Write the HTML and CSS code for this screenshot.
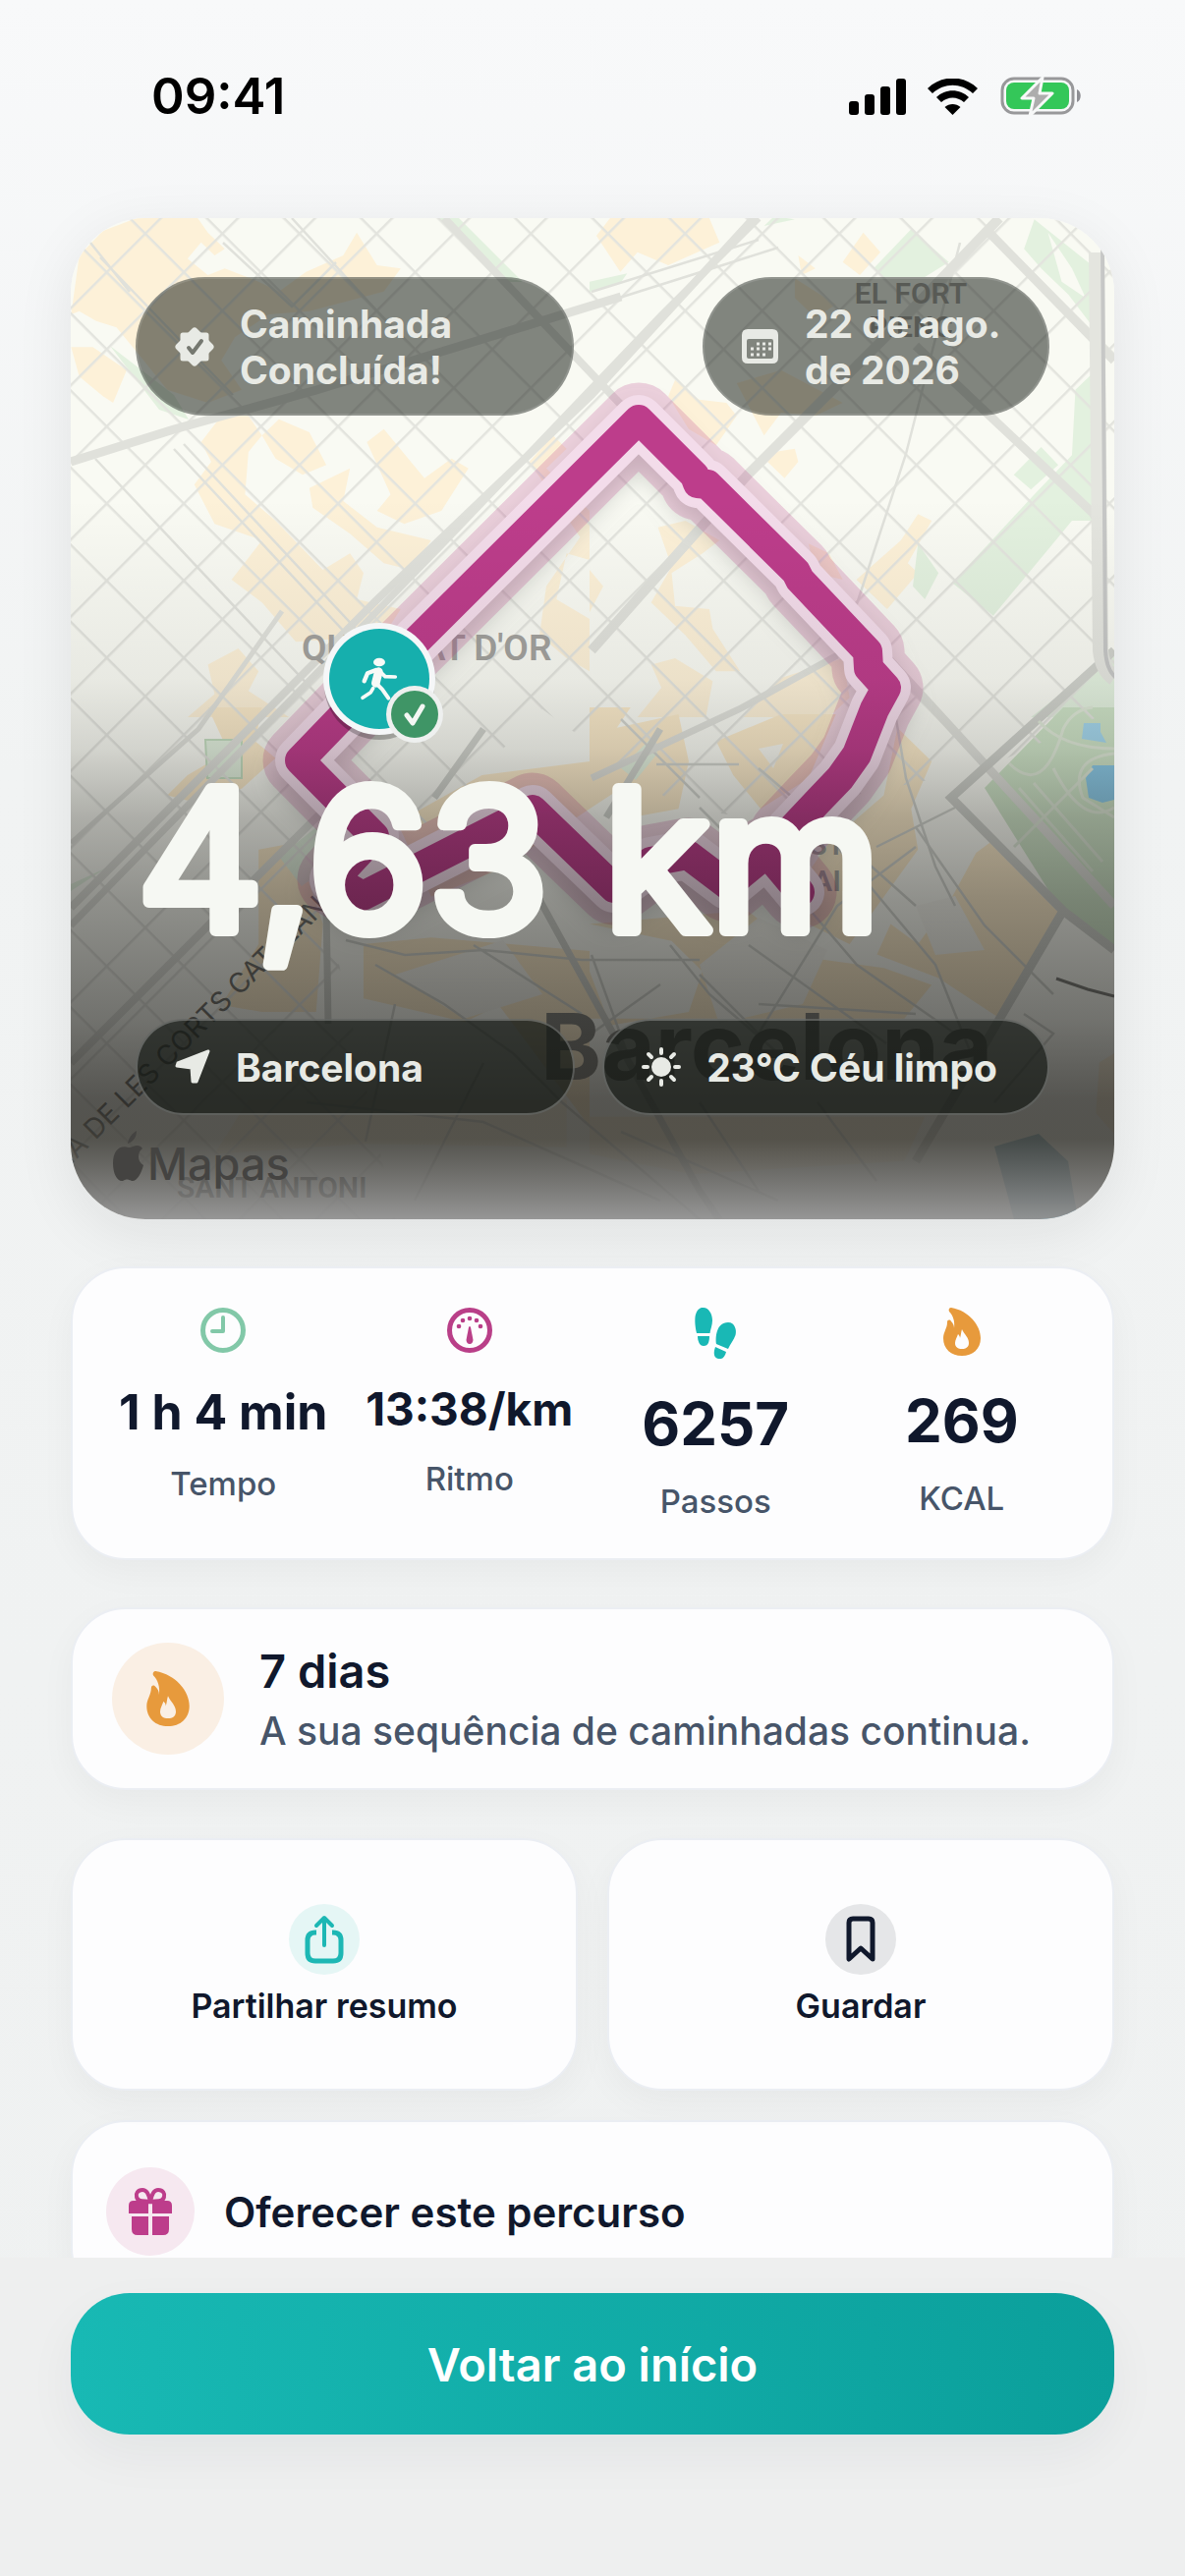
FILE: index.html
```html
<!DOCTYPE html>
<html lang="pt">
<head>
    <meta charset="UTF-8">
    <meta name="viewport" content="width=device-width, initial-scale=1">
    <title>Caminhada Concluída!</title>
    <link rel="stylesheet" href="styles.css">
</head>
<body>
<div class="app">
    <header class="statusBar">
        <time class="clock">09:41</time>
        <div class="statusIcons">
            <svg width="58" height="37" viewBox="0 0 58 37">
                <rect x="0" y="23" width="10" height="14" rx="3"/>
                <rect x="16" y="16" width="10" height="21" rx="3"/>
                <rect x="32" y="8" width="10" height="29" rx="3"/>
                <rect x="48" y="0" width="10" height="37" rx="3"/>
            </svg>
            <svg width="52" height="37" viewBox="0 0 52 37">
                <path d="M0 10C14-4 37-4 51 10L46 15C34 4 17 4 5 15Z"/>
                <path d="M9 19C18 10 33 10 42 19L37 24C30 18 21 18 14 24Z"/>
                <path d="M17.500 29C22 25 29 25 33.500 29L25.500 37Z"/>
            </svg>
            <svg width="84" height="40" viewBox="0 0 84 40">
                <rect x="2" y="2" width="72" height="35" rx="12" fill="none" stroke="#98989a" stroke-width="3"/>
                <rect x="6" y="6" width="64" height="27" rx="8" fill="#34c759"/>
                <path d="M78 13C83 15 83 24 78 26Z" fill="#8e8e93"/>
                <path d="M43 1L22 22H34L30 40L53 17H40Z" fill="#adadad" stroke="#f7f8f8" stroke-width="3" stroke-linejoin="round"/>
            </svg>
        </div>
    </header>

    <main class="content">
        <section class="hero">
            <svg class="map" viewBox="0 0 1062 1019" preserveAspectRatio="xMidYMid slice">
                <defs>
                    <pattern id="blocks" width="55.500" height="55.500" patternUnits="userSpaceOnUse" patternTransform="translate(743 251) rotate(45)">
                        <path d="M28 0V56M0 28H56" fill="none" stroke="#e3e4de" stroke-width="2.500"/>
                    </pattern>
                    <linearGradient id="shade" x1="0" y1="0" x2="0" y2="1">
                        <stop offset="0" stop-color="#000" stop-opacity="0"/>
                        <stop offset=".28" stop-color="#000" stop-opacity="0"/>
                        <stop offset=".46" stop-color="#0a0a08" stop-opacity=".07"/>
                        <stop offset=".53" stop-color="#0a0a08" stop-opacity=".16"/>
                        <stop offset=".6" stop-color="#0a0a08" stop-opacity=".32"/>
                        <stop offset=".68" stop-color="#0a0a08" stop-opacity=".44"/>
                        <stop offset=".8" stop-color="#10100e" stop-opacity=".58"/>
                        <stop offset=".88" stop-color="#1c1b18" stop-opacity=".74"/>
                        <stop offset=".92" stop-color="#35342f" stop-opacity=".84"/>
                        <stop offset="1" stop-color="#909090" stop-opacity=".94"/>
                    </linearGradient>
                    <filter id="soft" x="-10%" y="-10%" width="120%" height="120%">
                        <feGaussianBlur stdDeviation="12"/>
                    </filter>
                    <path id="route" d="M313 469L233 552L309 629L268 673L297 690L470 602L553 682L590 655L628 648L669 679L709 646L742 686L716 655L728 628L760 594L783 570L800 546L818 500L830 478L812 458L811 441L742 368L738 360L648 271L638 270L635 262L578 205Z"/>
                </defs>
                <rect width="1062" height="1019" fill="#f9faf3"/>

                <!-- built-up blocks -->
                <g transform="translate(-12 -12) scale(.3444 .3333)" fill="#fdf1d8">
                    <path d="M36 330L60 150L130 75L230 36H410L440 80L490 130L460 150L420 110L380 160L440 210L490 190L590 230L650 260L730 200L840 150L880 80L940 180L1010 190L960 260L850 290L740 320L620 330L520 400L480 470L540 560L440 600L320 560L250 470L170 370L110 350L60 320Z"/>
                    <path d="M36 430L100 430L200 500L160 600L130 580L60 520Z"/>
                    <path d="M480 640L560 640L600 700L650 650L740 690L790 790L720 820L640 770L600 700L560 750L550 880L640 960L780 1110L860 1060L900 1120L880 1200L1010 1230L960 1310L700 1330L600 1210L510 1140L600 1020L460 970L400 850L450 780L420 720Z"/>
                    <path d="M910 720L960 680L1080 830L1160 770L1210 800L1130 930L1020 970L940 930L980 880Z"/>
                    <path d="M740 860L860 800L840 900L940 980L1100 1020L1040 1110L960 1090L860 1000L750 920Z"/>
                    <path d="M1390 780L1460 700L1500 740L1440 800L1568 930V1080L1500 1060L1470 1200L1568 1260V1420L1500 1380L1420 1310L1440 1160L1540 1010Z"/>
                    <path d="M440 1400L530 1350L590 1420L560 1480L680 1560H380L460 1490Z"/>
                </g>
                <g transform="translate(528 -12) scale(.3482 .3333)" fill="#fdf1d8">
                    <path d="M60 36H350L380 110L230 180L140 140L90 200L20 90Z"/>
                    <path d="M610 150L660 190L620 210ZM740 170L800 80L850 140L790 210Z"/>
                    <path d="M600 220L720 300L660 340L600 280ZM430 540L560 500L740 600L660 640L560 630L510 700Z"/>
                    <path d="M250 530L320 590L400 600L430 640L370 730L290 680L230 580ZM540 750L600 740L610 780L570 830L520 780Z"/>
                    <path d="M200 980L280 960L380 1020L330 1060L240 1120L250 1220L350 1230L360 1290L440 1420L370 1420L280 1310L180 1210L240 1100Z"/>
                    <path d="M640 1030L700 1060L740 1140L660 1120ZM960 940L1000 960L930 1090L960 1120L870 1230L780 1140L910 1020Z"/>
                    <path d="M180 1400L250 1380L360 1450L340 1560H140L210 1470ZM560 1440L740 1380L760 1500L700 1560H450ZM0 1110L40 1160L0 1240Z"/>
                </g>
                <g transform="translate(-12 498) scale(.3444 .3444)" fill="#fbebcb">
                    <path d="M440 0H600L580 100L640 150L540 240L400 280L320 260L380 200L500 130ZM590 420L700 400L780 640L760 900L600 900L480 880L590 700Z"/>
                    <path d="M1000 340L1250 200L1568 160V300L1300 480L1100 560ZM900 700L1100 680L1568 720V1240L1300 880L1200 930L900 860Z"/>
                    <path d="M560 1160H1500V1300L900 1290L460 1320Z" opacity=".5"/>
                </g>
                <g transform="translate(528 498) scale(.3482 .3444)" fill="#fbebcb">
                    <path d="M0 0H120L80 60L260 20L290 160L260 300L150 320L90 240L0 300ZM370 100L560 20H720L640 210L500 300L420 200ZM900 60L1000 160L940 300L960 420L760 700L560 600L700 400L860 260Z"/>
                    <path d="M1130 430L1170 400L1375 610L1200 920L1020 800L840 730L880 640L960 700L1060 560ZM0 640L460 600L640 740L860 770L1000 820L920 920H0V780L60 940L290 900L330 780L240 690Z"/>
                    <path d="M0 1210H980L920 1340L300 1380L0 1320ZM1490 1050L1568 1000V1300L1480 1200Z" opacity=".6"/>
                </g>
                <path d="M640 760L700 712L770 745L745 800L660 820ZM330 770L440 735L480 790L400 815ZM860 700L900 690L930 745L880 750ZM700 540L725 535L715 560Z" fill="#f5f5ee"/>

                <!-- parks and water -->
                <g transform="translate(528 -12) scale(.3482 .3333)" fill="#e3f1df">
                    <path d="M830 190L940 70L1050 170L980 216H860ZM1300 40L1480 190V380L1400 270L1320 190L1270 130ZM1420 560L1480 500V960L1410 960L1180 1250L1060 1150L1300 880L1410 760ZM1320 735L1370 790L1290 865L1240 820ZM960 1030L1020 1120L980 1200L945 1160Z"/>
                    <path d="M0 230L110 205L90 235L0 262ZM510 60L600 40L540 30ZM1290 1560L1500 1390L1568 1360V1560Z"/>
                    <path d="M1340 80L1410 190L1450 280L1380 230Z" fill="#f9faf3"/>
                </g>
                <g fill="#e3f1df">
                    <path d="M40 130L105 180L120 205L90 195ZM375 0H395L460 65H445Z"/>
                    <path d="M137 531H174V570H139Z" stroke="#c4dec0" stroke-width="2"/>
                    <path d="M212 650L250 620L262 660L235 680ZM0 678L35 662L0 685Z"/>
                    <path d="M930 580L1010 498H1062V745L1010 708Z" fill="#cfe4c8"/>
                    <path d="M560 560L592 528L597 545L575 572Z"/>
                    <path d="M1031 514H1048V523L1054 534L1029 530Z" fill="#a6d8ee"/>
                    <path d="M1040 557H1062V592L1050 595L1036 590L1033 570Z" fill="#8dcbe8"/>
                    <path d="M940 945L985 932L1015 960L1025 1019H960Z" fill="#8fb8c8"/>
                </g>

                <!-- street grid -->
                <path d="M0 0H1062V500L930 560L690 610L620 600L480 500L380 600L260 700L330 1019H0Z" fill="url(#blocks)"/>
                <g fill="none" stroke="#e0e1db" stroke-width="2.500">
                    <path d="M25 245L265 500M115 230L320 450L370 500M105 235L310 455M225 0L335 120M155 25L225 90L270 45M30 40L165 180M20 25L60 75"/>
                    <path d="M530 75L700 22M530 90L720 30M905 25L850 240L795 408"/>
                </g>
                <g fill="none" stroke="#d3d5cf" stroke-width="2.500">
                    <path d="M596 556H680M640 590L560 510M700 560L770 620L860 700M680 640L640 600M820 640L900 600M840 510L850 570L880 660L900 700"/>
                    <path d="M280 735L340 750L420 745L520 755H640M310 760L380 800L450 850L500 900M530 750L570 860M610 740L650 790L720 850M690 740L760 790L830 840M640 770L700 830L780 700L860 640M740 690L800 760L900 830M780 640L880 760L920 860M860 620L930 720L1000 790M700 800L860 810M960 790L920 860M970 810L1000 830L940 900M600 780L530 830M410 740L520 810"/>
                    <path d="M330 800L300 940M420 860L350 1000M500 900L640 1019M560 930L720 1000M640 900L700 990M760 900L820 980M240 900L420 920L600 1000"/>
                </g>
                <g fill="none" stroke="#e0e1db">
                    <path d="M0 248L105 215L250 175L560 80" stroke-width="9"/>
                    <path d="M0 636L130 520L215 400" stroke-width="5"/>
                    <path d="M0 720L380 330L600 100L700 0" stroke-width="7"/>
                    <path d="M0 702L310 390L530 180L695 0M380 0L560 190L590 230M0 860L270 590" stroke-width="8"/>
                    <path d="M530 440L690 260L830 120L945 0" stroke-width="10"/>
                    <path d="M935 15L1062 145M860 130L1040 300L1050 315M815 430L1062 700" stroke-width="9"/>
                    <path d="M530 570L680 500L780 445" stroke-width="7"/>
                </g>
                <g fill="none" stroke="#d0d2cc">
                    <path d="M1062 440L896 590L1010 705L1062 745M1010 705L860 960" stroke-width="9"/>
                    <path d="M370 590L420 520M475 690L640 990L660 1019M260 700L262 820M545 610L600 520" stroke-width="7"/>
                </g>
                <path d="M1044 35L1048 440Q1050 460 1062 468" fill="none" stroke="#e4e5df" stroke-width="16"/>
                <path d="M1050 28L1053 440Q1054 460 1064 468" fill="none" stroke="#c6c7c6" stroke-width="4"/>
                <g fill="none" stroke="#dfe9d8" stroke-width="3">
                    <path d="M955 555Q990 590 1010 520Q1020 500 1040 498M965 580L1040 665M980 575L1050 655M1000 560Q1030 620 1062 600M985 512Q1010 540 1062 540M1062 545Q1015 550 1030 590L1062 610M960 640L1040 560"/>
                </g>
                <path d="M1003 774L1035 785L1062 792" fill="none" stroke="#7c7c78" stroke-width="3"/>

                <!-- place names -->
                <g class="mapLabel">
                    <text x="235" y="450" font-size="37">QUADRAT D'OR</text>
                    <text x="855" y="87" font-size="30" text-anchor="middle">EL FORT</text>
                    <text x="855" y="121" font-size="30" text-anchor="middle">PIENC</text>
                    <text x="788" y="648" font-size="30" text-anchor="end">ST</text>
                    <text x="805" y="685" font-size="30" text-anchor="end">RAIN</text>
                    <text x="108" y="997" font-size="30" class="dark">SANT ANTONI</text>
                </g>
                <text class="streetLabel" transform="translate(262 702) rotate(-45)" text-anchor="end">VIA DE LES CORTS CATALAN</text>
                <text class="cityLabel" x="478" y="877">Barcelona</text>

                <!-- walked route -->
                <g fill="none" stroke-linejoin="round" stroke-linecap="round">
                    <use href="#route" transform="translate(0 14)" stroke="#8a8f8a" stroke-opacity=".4" stroke-width="50" filter="url(#soft)"/>
                    <use href="#route" stroke="#bb3d88" stroke-opacity=".22" stroke-width="75"/>
                    <use href="#route" stroke="#f3dcea" stroke-width="50"/>
                    <use href="#route" stroke="#bd3d8b" stroke-width="30"/>
                </g>
                <rect width="1062" height="1019" fill="url(#shade)"/>
                <g>
                    <circle cx="314" cy="475" r="56" fill="#000" opacity=".25"/>
                    <circle cx="314" cy="469" r="57" fill="#f5f7f8"/>
                    <circle cx="314" cy="469" r="51" fill="#16afad"/>
                    <g transform="translate(198 418) scale(.3333)" fill="none" stroke="#f7faf7" stroke-linecap="round" stroke-linejoin="round">
                        <ellipse cx="348" cy="102" rx="18" ry="13" fill="#f7faf7" stroke="none"/>
                        <path d="M346 131L337 166" stroke-width="26"/>
                        <path d="M338 126L312 136L302 160" stroke-width="13"/>
                        <path d="M350 130L366 146L397 147" stroke-width="11"/>
                        <path d="M340 168L357 185L376 212" stroke-width="12"/>
                        <path d="M329 182L322 194L297 211" stroke-width="11"/>
                    </g>
                    <circle cx="350" cy="505" r="29" fill="#eef0ef"/>
                    <circle cx="350" cy="505" r="24" fill="#3f9566"/>
                    <path d="M342 506L348 514L358 497" fill="none" stroke="#f3f7f3" stroke-width="5" stroke-linecap="round" stroke-linejoin="round"/>
                </g>
                <!-- map provider -->
                <g fill="#444341">
                    <path d="M58 942C59 936 62 932 67 929C67 935 64 940 58 942ZM59 946C63 946 69 941 73 947C68 950 67 960 74 964C72 972 67 981 62 980C58 978 56 978 53 980C47 981 43 972 43 962C43 949 50 943 59 946Z"/>
                    <text class="provider" x="78" y="979">Mapas</text>
                </g>
            </svg>

            <div class="heroBody">
                <div class="row spread">
                    <div class="pill tall done">
                        <svg class="icon" width="40" height="40" viewBox="0 0 40 40">
                            <path d="M8 8H32V32H8Z" fill="currentColor" stroke="currentColor" stroke-width="5" stroke-linejoin="round"/>
                            <path d="M20 4L36 20L20 36L4 20Z" fill="currentColor" stroke="currentColor" stroke-width="7" stroke-linejoin="round"/>
                            <path d="M14 21L18 26L27 14" fill="none" stroke="#757870" stroke-width="4" stroke-linecap="round" stroke-linejoin="round"/>
                        </svg>
                        <span>Caminhada Concluída!</span>
                    </div>
                    <div class="pill tall date">
                        <svg class="icon" width="38" height="36" viewBox="0 0 38 36">
                            <path fill="currentColor" fill-rule="evenodd" d="M6 0H31Q37 0 37 6V29Q37 35 31 35H6Q0 35 0 29V6Q0 0 6 0ZM7 10Q5 10 5 12V28Q5 30 7 30H30Q32 30 32 28V12Q32 10 30 10Z"/>
                            <path fill="none" stroke="currentColor" stroke-width="3" stroke-dasharray="3 3" d="M15 15H30M9 20H30M9 26H24"/>
                        </svg>
                        <span>22 de ago. de 2026</span>
                    </div>
                </div>
                <h1 class="distance">
                    <svg width="800" height="190" viewBox="0 0 800 190"><text x="2" y="157">4,63 km</text></svg>
                </h1>
                <div class="row">
                    <div class="pill low">
                        <svg class="icon" width="36" height="36" viewBox="0 0 36 36">
                            <path d="M34 2L22 33H18L17 19L2 17L3 14Z" fill="currentColor" stroke="currentColor" stroke-width="3" stroke-linejoin="round"/>
                        </svg>
                        <span>Barcelona</span>
                    </div>
                    <div class="pill low weather">
                        <svg class="icon" width="40" height="40" viewBox="0 0 40 40">
                            <circle cx="20" cy="20" r="10" fill="currentColor"/>
                            <path d="M20 2V6M20 34V38M2 20H6M34 20H38M7 7L10 10M30 30L33 33M7 33L10 30M30 10L33 7" stroke="currentColor" stroke-width="4" stroke-linecap="round"/>
                        </svg>
                        <span>23°C Céu limpo</span>
                    </div>
                </div>
            </div>
        </section>

        <section class="card stats">
            <div class="stat">
                <svg width="46" height="46" viewBox="0 0 46 46" fill="none" stroke="#82c8a8">
                    <circle cx="23" cy="23" r="20.500" stroke-width="5"/>
                    <path d="M23 10V24H12" stroke-width="4" stroke-linecap="round" stroke-linejoin="round"/>
                </svg>
                <strong class="mid">1 h 4 min</strong>
                <span>Tempo</span>
            </div>
            <div class="stat">
                <svg width="46" height="46" viewBox="0 0 46 46" fill="#b93f88">
                    <circle cx="23" cy="23" r="20.500" fill="none" stroke="#b93f88" stroke-width="5"/>
                    <circle cx="12" cy="19" r="2.300"/>
                    <circle cx="16" cy="13" r="2.300"/>
                    <circle cx="23" cy="11" r="2.300"/>
                    <circle cx="30" cy="13" r="2.300"/>
                    <circle cx="34" cy="19" r="2.300"/>
                    <path d="M22 20Q23 18 24 20L26.500 33Q26 37 23 37Q20 37 19.500 33Z"/>
                </svg>
                <strong class="small">13:38/km</strong>
                <span>Ritmo</span>
            </div>
            <div class="stat">
                <svg width="43" height="52" viewBox="0 0 43 52" fill="#19b8b5">
                    <path d="M2 26C0 18 0 10 1 7C3 0 7 0 9 0C14 0 18 6 18 13C18 18 16 22 15.500 26Z"/>
                    <path d="M3 29H15C15 34 14 39 9 39C5 39 3 34 3 29Z"/>
                    <path d="M22 37C21 30 22 15 34 15C41 15 43 23 41.500 28C40 33 36 37 34 42Z"/>
                    <path d="M21 40L32 45C31 50 28 53 24 52C19 51 19 46 21 40Z"/>
                </svg>
                <strong>6257</strong>
                <span>Passos</span>
            </div>
            <div class="stat">
                <svg width="38" height="49" viewBox="0 0 38 49" fill="#e79a3c">
                    <path id="flame" fill-rule="evenodd" d="M8 0C26 3 38 18 38 31C38 42 30 49 19 49C8 49 0 42 0 31C0 25 4 21 4 15C4 12 7 12 8 14C10 16 11 18 11 21C12 14 10 8 6 4C5 2 6 0 8 0ZM19 22C21 27 26 30 26 36C26 40 23 42 19 42C15 42 12 40 12 36C12 33 14 30 15 27C16 28 17 29 17 31C18 28 18 25 19 22Z"/>
                </svg>
                <strong>269</strong>
                <span>KCAL</span>
            </div>
        </section>

        <section class="card streak">
            <div class="bubble big">
                <svg width="44" height="56" viewBox="0 0 38 49" fill="#e79a3c"><use href="#flame"/></svg>
            </div>
            <div>
                <h2>7 dias</h2>
                <p>A sua sequência de caminhadas continua.</p>
            </div>
        </section>

        <div class="actions">
            <button type="button" class="card action">
                <span class="bubble share">
                    <svg width="40" height="50" viewBox="0 0 40 50" fill="none" stroke="#1db7b4" stroke-width="5" stroke-linecap="round" stroke-linejoin="round">
                        <path d="M12 18H11Q3 18 3 26V39Q3 47 11 47H29Q37 47 37 39V26Q37 18 29 18H28" stroke-linecap="butt"/>
                        <path d="M20 31V4M12 11L20 3L28 11" stroke-width="4"/>
                    </svg>
                </span>
                Partilhar resumo
            </button>
            <button type="button" class="card action">
                <span class="bubble save">
                    <svg width="30" height="47" viewBox="0 0 30 47" fill="none" stroke="#10182c" stroke-width="5" stroke-linejoin="round">
                        <path d="M3 44V7Q3 3 7 3H23Q27 3 27 7V44L15 33Z"/>
                    </svg>
                </span>
                Guardar
            </button>
        </div>

        <button type="button" class="card gift">
            <span class="bubble">
                <svg width="44" height="48" viewBox="0 0 44 48" fill="#bd3d8b">
                    <path d="M5 13H20V26H0V18Q0 13 5 13ZM24 13H39Q44 13 44 18V26H24ZM3 29H20V48H9Q3 48 3 42ZM24 29H41V42Q41 48 35 48H24Z"/>
                    <path d="M22 14C20 5 18 2 14 2C9 2 7 6 8 9C9 14 14 13 22 14ZM22 14C24 5 26 2 30 2C35 2 37 6 36 9C35 14 30 13 22 14Z" fill="none" stroke="#bd3d8b" stroke-width="4"/>
                </svg>
            </span>
            Oferecer este percurso
        </button>
    </main>

    <footer class="bottomBar">
        <button type="button" class="primary">Voltar ao início</button>
    </footer>
</div>
</body>
</html>
```
FILE: styles.css
```css
*{
    box-sizing: border-box;
    margin: 0;
    padding: 0;
}
body{
    font-family: Inter, "Liberation Sans", sans-serif;
    color: #10182c;
    background: #f3f5f5;
}
button{
    font: inherit;
    color: inherit;
    border: none;
    cursor: pointer;
}
svg{
    display: block;
    flex-shrink: 0;
}
.app{
    display: flex;
    flex-direction: column;
    height: 100vh;
    background: linear-gradient(#f8f9fa, #f1f3f3 30%, #eff1f1);
}

/* status bar */
.statusBar{
    display: flex;
    justify-content: space-between;
    align-items: center;
    padding: 64px 104px 10px 154px;
}
.clock{
    font-size: 51px;
    font-weight: 600;
    line-height: 68px;
    color: #000;
}
.statusIcons{
    display: flex;
    align-items: center;
    gap: 22px;
}

.content{
    flex: 1;
    min-height: 0;
    overflow: hidden;
    padding: 80px 72px 0;
}
.card{
    width: 100%;
    background: #fdfdfe;
    border: 2px solid #ebeef3;
    border-radius: 56px;
    box-shadow: 0 12px 36px rgba(20, 30, 30, .04);
}

/* map card */
.hero{
    display: grid;
    aspect-ratio: 1062 / 1019;
    margin-bottom: 48px;
    border-radius: 76px;
    overflow: hidden;
    box-shadow: 0 14px 60px rgba(20, 30, 30, .08);
}
.map, .heroBody{
    grid-area: 1 / 1;
    min-width: 0;
    min-height: 0;
}
.map{
    width: 100%;
    height: 100%;
}
.mapLabel{
    font-family: Roboto, sans-serif;
    font-weight: 600;
    fill: #a3a29e;
}
.mapLabel .dark{
    fill: #4a4a48;
}
.streetLabel{
    font-size: 28px;
    fill: #6e6e6a;
}
.cityLabel{
    font-size: 94px;
    font-weight: 700;
    fill: #7f7f7b;
}
.provider{
    font-size: 45px;
    font-weight: 500;
}
.heroBody{
    display: flex;
    flex-direction: column;
    padding: 60px 66px 106px;
    color: #e8eae5;
    z-index: 1;
}
.row{
    display: flex;
    gap: 28px;
}
.spread{
    justify-content: space-between;
}
.pill{
    display: flex;
    align-items: center;
    gap: 26px;
    padding: 0 38px;
    border: 2px solid rgba(255, 255, 255, .12);
    border-radius: 72px;
    background: rgba(20, 25, 20, .52);
    font-size: 39px;
    font-weight: 700;
    line-height: 47px;
}
.tall{
    height: 141px;
}
.done{
    width: 446px;
}
.date{
    width: 353px;
}
.low{
    flex: 49;
    height: 98px;
    border-color: rgba(255, 255, 255, .25);
    background: rgba(20, 25, 21, .68);
    white-space: nowrap;
}
.weather{
    flex: 50;
}
.distance{
    margin-top: auto;
    margin-bottom: 57px;
}
.distance svg{
    overflow: visible;
}
/* the round-joined outline softens the corners of the digits */
.distance text{
    font-size: 198px;
    font-weight: 400;
    fill: #f6f8f3;
    stroke: #f6f8f3;
    stroke-width: 12px;
    stroke-linejoin: round;
}

/* numbers */
.stats{
    display: grid;
    grid-template-columns: repeat(4, 1fr);
    padding: 40px 28px 0;
    height: 299px;
    margin-bottom: 48px;
}
.stat{
    display: flex;
    flex-direction: column;
    align-items: center;
    white-space: nowrap;
}
.stat strong{
    margin-top: 30px;
    font-size: 60px;
    font-weight: 700;
    line-height: 1.2;
}
.stat .mid{
    font-size: 50px;
}
.stat .small{
    font-size: 46px;
}
.stat span{
    margin-top: 23px;
    font-size: 33px;
    font-weight: 500;
    line-height: 40px;
    color: #475569;
}

/* streak */
.bubble{
    display: flex;
    align-items: center;
    justify-content: center;
    flex-shrink: 0;
    width: 90px;
    height: 90px;
    border-radius: 50%;
    background: #f6e8f0;
}
.big{
    width: 114px;
    height: 114px;
    background: #faefe4;
}
.streak{
    display: flex;
    align-items: center;
    gap: 36px;
    height: 186px;
    padding: 0 40px;
    margin-bottom: 49px;
}
.streak h2{
    font-size: 47px;
    font-weight: 600;
    line-height: 66px;
}
.streak p{
    font-size: 39px;
    font-weight: 500;
    line-height: 56px;
    color: #475569;
}

/* actions */
.actions{
    display: flex;
    gap: 30px;
    margin-bottom: 30px;
}
.action{
    display: flex;
    flex-direction: column;
    align-items: center;
    justify-content: center;
    gap: 12px;
    height: 257px;
    font-size: 34px;
    font-weight: 600;
    line-height: 40px;
}
.share, .save{
    width: 72px;
    height: 72px;
}
.share{
    background: #e5f6f5;
}
.save{
    background: #e5e6e8;
}
.gift{
    display: flex;
    align-items: center;
    gap: 30px;
    height: 186px;
    padding: 0 34px;
    font-size: 42px;
    font-weight: 600;
}

/* bottom bar */
.bottomBar{
    padding: 36px 72px 144px;
    background: #eeefef;
}
.primary{
    display: block;
    width: 100%;
    height: 144px;
    border-radius: 60px;
    background: linear-gradient(90deg, #18b9b4, #0b9f9b);
    color: #fff;
    font-size: 47px;
    font-weight: 600;
    box-shadow: 0 20px 50px rgba(20, 30, 60, .05);
}
```
